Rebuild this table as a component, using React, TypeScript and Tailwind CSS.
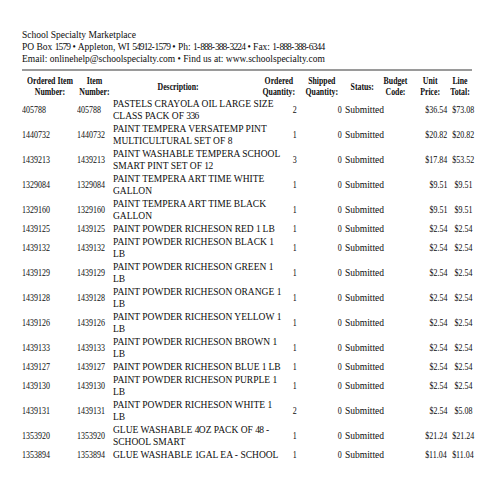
import React from 'react';

type Row = {
    orderedItem: string;
    item: string;
    desc: string[];
    ordered: number;
    shipped: number;
    status: string;
    unit: string;
    total: string;
};

const rows: Row[] = [
    { orderedItem: '405788', item: '405788', desc: ['PASTELS CRAYOLA OIL LARGE SIZE', 'CLASS PACK OF 336'], ordered: 2, shipped: 0, status: 'Submitted', unit: '$36.54', total: '$73.08' },
    { orderedItem: '1440732', item: '1440732', desc: ['PAINT TEMPERA VERSATEMP PINT', 'MULTICULTURAL SET OF 8'], ordered: 1, shipped: 0, status: 'Submitted', unit: '$20.82', total: '$20.82' },
    { orderedItem: '1439213', item: '1439213', desc: ['PAINT WASHABLE TEMPERA SCHOOL', 'SMART PINT SET OF 12'], ordered: 3, shipped: 0, status: 'Submitted', unit: '$17.84', total: '$53.52' },
    { orderedItem: '1329084', item: '1329084', desc: ['PAINT TEMPERA ART TIME WHITE', 'GALLON'], ordered: 1, shipped: 0, status: 'Submitted', unit: '$9.51', total: '$9.51' },
    { orderedItem: '1329160', item: '1329160', desc: ['PAINT TEMPERA ART TIME BLACK', 'GALLON'], ordered: 1, shipped: 0, status: 'Submitted', unit: '$9.51', total: '$9.51' },
    { orderedItem: '1439125', item: '1439125', desc: ['PAINT POWDER RICHESON RED 1 LB'], ordered: 1, shipped: 0, status: 'Submitted', unit: '$2.54', total: '$2.54' },
    { orderedItem: '1439132', item: '1439132', desc: ['PAINT POWDER RICHESON BLACK 1', 'LB'], ordered: 1, shipped: 0, status: 'Submitted', unit: '$2.54', total: '$2.54' },
    { orderedItem: '1439129', item: '1439129', desc: ['PAINT POWDER RICHESON GREEN 1', 'LB'], ordered: 1, shipped: 0, status: 'Submitted', unit: '$2.54', total: '$2.54' },
    { orderedItem: '1439128', item: '1439128', desc: ['PAINT POWDER RICHESON ORANGE 1', 'LB'], ordered: 1, shipped: 0, status: 'Submitted', unit: '$2.54', total: '$2.54' },
    { orderedItem: '1439126', item: '1439126', desc: ['PAINT POWDER RICHESON YELLOW 1', 'LB'], ordered: 1, shipped: 0, status: 'Submitted', unit: '$2.54', total: '$2.54' },
    { orderedItem: '1439133', item: '1439133', desc: ['PAINT POWDER RICHESON BROWN 1', 'LB'], ordered: 1, shipped: 0, status: 'Submitted', unit: '$2.54', total: '$2.54' },
    { orderedItem: '1439127', item: '1439127', desc: ['PAINT POWDER RICHESON BLUE 1 LB'], ordered: 1, shipped: 0, status: 'Submitted', unit: '$2.54', total: '$2.54' },
    { orderedItem: '1439130', item: '1439130', desc: ['PAINT POWDER RICHESON PURPLE 1', 'LB'], ordered: 1, shipped: 0, status: 'Submitted', unit: '$2.54', total: '$2.54' },
    { orderedItem: '1439131', item: '1439131', desc: ['PAINT POWDER RICHESON WHITE 1', 'LB'], ordered: 2, shipped: 0, status: 'Submitted', unit: '$2.54', total: '$5.08' },
    { orderedItem: '1353920', item: '1353920', desc: ['GLUE WASHABLE 4OZ PACK OF 48 -', 'SCHOOL SMART'], ordered: 1, shipped: 0, status: 'Submitted', unit: '$21.24', total: '$21.24' },
    { orderedItem: '1353894', item: '1353894', desc: ['GLUE WASHABLE 1GAL EA - SCHOOL'], ordered: 1, shipped: 0, status: 'Submitted', unit: '$11.04', total: '$11.04' },
];

// the source font has narrow figures; tighten digit runs in running text
const Txt = ({ s, tight }: { s: string; tight?: boolean }) => (
    <>
        {s.split(/(\d+)/).map((part, i) =>
            /\d/.test(part) ? (
                <span key={i} className={tight ? 'tracking-[-0.9px]' : 'tracking-[-0.6px]'}>{part}</span>
            ) : (
                part
            )
        )}
    </>
);

// narrow figures for the numeric cells
const Num = ({ v, right }: { v: string | number; right?: boolean }) => (
    <span className={`inline-block scale-x-[0.84] ${right ? 'origin-right' : 'origin-left'}`}>{v}</span>
);

// bold header labels are set condensed in the source
const H = ({ children }: { children: React.ReactNode }) => (
    <span className="inline-block scale-x-[0.82] origin-center">{children}</span>
);

const th = 'font-bold text-center align-middle whitespace-nowrap leading-[11px] p-0';
const td = 'align-middle whitespace-nowrap p-0 pb-px';

export default function App() {
    return (
        <div className="w-[495px] h-[495px] overflow-hidden bg-white text-[#0d0d0d] font-['Liberation_Serif',serif] text-[9.5px]">
            <div className="ml-[22px] w-[450px] pt-[29px]">
                {/* Company header */}
                <div className="leading-[12px]">
                    <div>School Specialty Marketplace</div>
                    <div><Txt tight s="PO Box 1579 • Appleton, WI 54912-1579 • Ph: 1-888-388-3224 • Fax: 1-888-388-6344" /></div>
                    <div>Email: onlinehelp@schoolspecialty.com • Find us at: www.schoolspecialty.com</div>
                </div>
                <div className="mt-[4px] h-[2px] bg-[#9a9a9a]" />

                <table className="mt-[5px] w-[450px] table-fixed border-collapse">
                    <colgroup>
                        <col className="w-[53px]" />
                        <col className="w-[38px]" />
                        <col className="w-[145px]" />
                        <col className="w-[42px]" />
                        <col className="w-[44px]" />
                        <col className="w-[36px]" />
                        <col className="w-[32px]" />
                        <col className="w-[36px]" />
                        <col className="w-[24px]" />
                    </colgroup>
                    <thead>
                        <tr className="h-[22px]">
                            <th className={th}><H>Ordered Item<br />Number:</H></th>
                            <th className={th}><H>Item<br />Number:</H></th>
                            <th className={`${th} !text-left pl-[40px]`}><H>Description:</H></th>
                            <th className={th}><H>Ordered<br />Quantity:</H></th>
                            <th className={th}><H>Shipped<br />Quantity:</H></th>
                            <th className={th}><H>Status:</H></th>
                            <th className={th}><H>Budget<br />Code:</H></th>
                            <th className={th}><H>Unit<br />Price:</H></th>
                            <th className={th}><H>Line<br />Total:</H></th>
                        </tr>
                    </thead>
                    <tbody className="leading-[12px]">
                        {rows.map((r) => (
                            <tr key={r.orderedItem}>
                                <td className={td}><Num v={r.orderedItem} /></td>
                                <td className={`${td} pl-[2px]`}><Num v={r.item} /></td>
                                <td className={`${td} align-top`}>
                                    {r.desc.map((line, i) => (
                                        <div key={i}><Txt s={line} /></div>
                                    ))}
                                </td>
                                <td className={`${td} text-right pr-[3px]`}><Num v={r.ordered} right /></td>
                                <td className={`${td} text-right pr-[2px]`}><Num v={r.shipped} right /></td>
                                <td className={`${td} pl-px`}>{r.status}</td>
                                <td className={td}></td>
                                <td className={`${td} text-right pr-px`}><Num v={r.unit} right /></td>
                                <td className={`${td} text-right`}><Num v={r.total} right /></td>
                            </tr>
                        ))}
                    </tbody>
                </table>
            </div>
        </div>
    );
}
